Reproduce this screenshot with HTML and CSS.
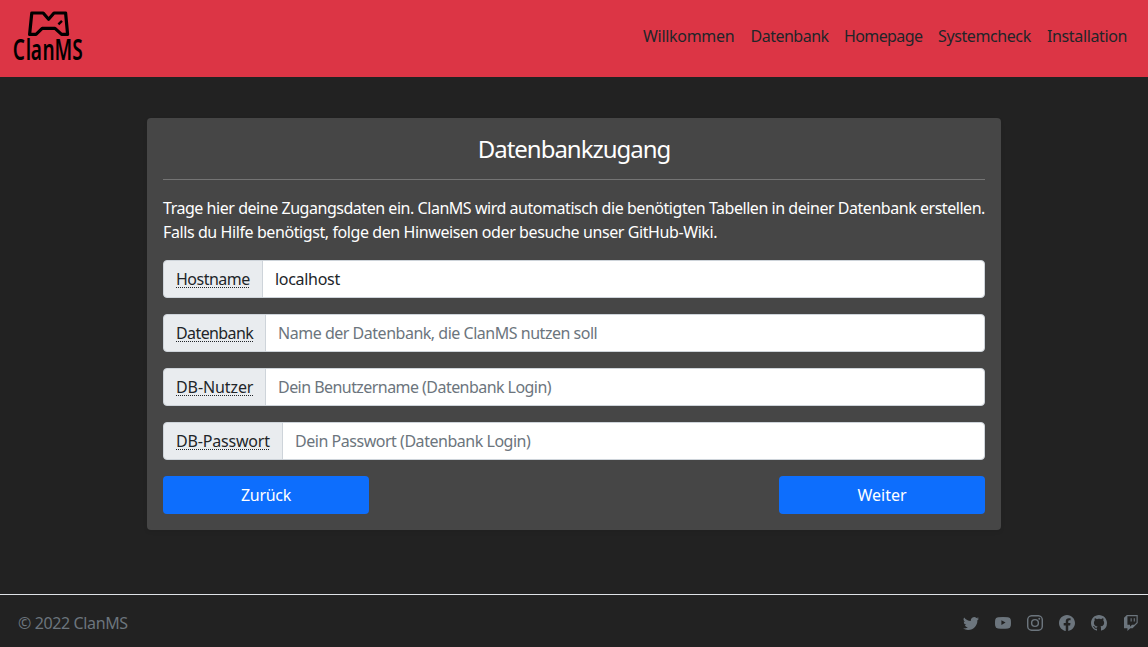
FILE: index.html
```html
<!DOCTYPE html>
<html lang="de">
<head>
<meta charset="utf-8">
<title>ClanMS Installation</title>
<link rel="stylesheet" href="styles.css">
</head>
<body>
<header class="navbar">
  <a class="brand" aria-label="ClanMS">
    <svg width="72" height="60" viewBox="0 0 72 60">
      <path class="mask" d="M19.8 5H31.2L36.6 11.2L42 5H53.6L55.6 26.4H49.6L43 20.4H30.2L24 26.4H17.6Z"/>
      <path class="eye" d="M46.4 16.4L50 12.8"/>
      <text transform="translate(0 52.2) scale(.68 1)" x="1.2 20.4 27.5 45 62.5 88.5">ClanMS</text>
    </svg>
  </a>
  <nav class="links">
    <a class="l1">Willkommen</a><a class="l2">Datenbank</a><a class="l3">Homepage</a><a class="l4">Systemcheck</a><a class="l5">Installation</a>
  </nav>
</header>
<main class="card">
  <h1>Datenbankzugang</h1>
  <hr>
  <p><span class="line1">Trage hier deine Zugangsdaten ein. ClanMS wird automatisch die benötigten Tabellen in deiner Datenbank erstellen.</span><br><span class="line2">Falls du Hilfe benötigst, folge den Hinweisen oder besuche unser GitHub-Wiki.</span></p>
  <form>
    <div class="group host"><label class="addon"><abbr>Hostname</abbr></label><input value="localhost"></div>
    <div class="group db"><label class="addon"><abbr>Datenbank</abbr></label><input placeholder="Name der Datenbank, die ClanMS nutzen soll"></div>
    <div class="group user"><label class="addon"><abbr>DB-Nutzer</abbr></label><input placeholder="Dein Benutzername (Datenbank Login)"></div>
    <div class="group pass"><label class="addon"><abbr>DB-Passwort</abbr></label><input type="text" placeholder="Dein Passwort (Datenbank Login)"></div>
    <div class="actions"><button type="button" class="back">Zurück</button><button type="button">Weiter</button></div>
  </form>
</main>
<footer class="footer">
  <span class="copy">© 2022 ClanMS</span>
  <div class="social">
    <svg viewBox="0 0 16 16"><path d="M5.026 15c6.038 0 9.341-5.003 9.341-9.334 0-.14 0-.282-.006-.422A6.685 6.685 0 0 0 16 3.542a6.658 6.658 0 0 1-1.889.518 3.301 3.301 0 0 0 1.447-1.817 6.533 6.533 0 0 1-2.087.793A3.286 3.286 0 0 0 7.875 6.03a9.325 9.325 0 0 1-6.767-3.429 3.289 3.289 0 0 0 1.018 4.382A3.323 3.323 0 0 1 .64 6.575v.045a3.288 3.288 0 0 0 2.632 3.218 3.203 3.203 0 0 1-.865.115 3.23 3.23 0 0 1-.614-.057 3.283 3.283 0 0 0 3.067 2.277A6.588 6.588 0 0 1 .78 13.58a6.32 6.32 0 0 1-.78-.045A9.344 9.344 0 0 0 5.026 15z"/></svg>
    <svg viewBox="0 0 16 16"><path fill-rule="evenodd" d="M3 2.2Q8 1.8 13 2.2Q15.5 2.4 15.8 4.8Q16.2 8 15.8 10.8Q15.5 13.3 13 13.5Q8 13.9 3 13.5Q.5 13.3.2 10.8Q-.2 8 .2 4.8Q.5 2.4 3 2.2ZM6.4 5.2V10L10.6 7.6Z"/></svg>
    <svg viewBox="0 0 16 16"><g fill="none" stroke="currentColor" stroke-width="1.45"><rect x=".72" y=".72" width="14.56" height="14.56" rx="4"/><circle cx="8" cy="8" r="3.38"/></g><circle cx="12.27" cy="3.73" r=".96"/></svg>
    <svg viewBox="0 0 16 16"><path d="M16 8.049c0-4.446-3.582-8.05-8-8.05C3.58 0-.002 3.603-.002 8.05c0 4.017 2.926 7.347 6.75 7.951v-5.625h-2.03V8.05H6.75V6.275c0-2.017 1.195-3.131 3.022-3.131.876 0 1.791.157 1.791.157v1.98h-1.009c-.993 0-1.303.621-1.303 1.258v1.51h2.218l-.354 2.326H9.25V16c3.824-.604 6.75-3.934 6.75-7.951z"/></svg>
    <svg viewBox="0 0 16 16"><path d="M8 0C3.58 0 0 3.58 0 8c0 3.54 2.29 6.53 5.47 7.59.4.07.55-.17.55-.38 0-.19-.01-.82-.01-1.49-2.01.37-2.53-.49-2.69-.94-.09-.23-.48-.94-.82-1.13-.28-.15-.68-.52-.01-.53.63-.01 1.08.58 1.23.82.72 1.21 1.87.87 2.33.66.07-.52.28-.87.51-1.07-1.78-.2-3.64-.89-3.64-3.95 0-.87.31-1.59.82-2.15-.08-.2-.36-1.02.08-2.12 0 0 .67-.21 2.2.82.64-.18 1.32-.27 2-.27.68 0 1.36.09 2 .27 1.53-1.04 2.2-.82 2.2-.82.44 1.1.16 1.92.08 2.12.51.56.82 1.27.82 2.15 0 3.07-1.87 3.75-3.65 3.95.29.25.54.73.54 1.48 0 1.07-.01 1.93-.01 2.2 0 .21.15.46.55.38A8.012 8.012 0 0 0 16 8c0-4.42-3.58-8-8-8z"/></svg>
    <svg viewBox="0 0 16 16"><path fill-rule="evenodd" d="M3.857 0 1 2.857v10.286h3.429V16l2.857-2.857H9.57L14.714 8V0H3.857zm9.714 7.429-2.285 2.285H9l-2 2v-2H4.429V1.143h9.142v6.286zM11.857 3.143h-1.143V6.57h1.143V3.143zm-3.143 0H7.571V6.57h1.143V3.143z"/></svg>
  </div>
</footer>
</body>
</html>
```
FILE: styles.css
```css
* { box-sizing: border-box; }
body {
  margin: 0;
  height: 647px;
  overflow: hidden;
  display: flex;
  flex-direction: column;
  background: #222;
  color: #fff;
  font: 16px/24px "Noto Sans", sans-serif;
}
.navbar {
  height: 77px;
  padding: 8px 21px 0 12px;
  display: flex;
  justify-content: space-between;
  background: #dc3545;
}
.brand svg { display: block; }
.brand text { font: 600 28px "Noto Sans", sans-serif; }
.mask { fill: none; stroke: #000; stroke-width: 3.2; stroke-linejoin: round; }
.eye { stroke: #000; stroke-width: 2.4; }
.links { display: flex; gap: 16px; padding-top: 16px; color: #212529; }
.links a { white-space: nowrap; }
.l1 { width: 91.5px; letter-spacing: -.3px; }
.l2 { width: 77.5px; letter-spacing: -.5px; }
.l3 { width: 78px; letter-spacing: -.6px; }
.l4 { width: 93px; letter-spacing: -.4px; }
.l5 { width: 80px; letter-spacing: -.37px; }
.card {
  width: 854px;
  height: 412px;
  margin: 41px auto 0;
  padding: 16px;
  border-radius: 4px;
  background: #464646;
  box-shadow: 0 2px 4px rgba(0, 0, 0, .075);
}
h1 { margin: 0; font-size: 24px; font-weight: 400; line-height: 29px; letter-spacing: -1.02px; text-align: center; }
hr { margin: 16px 0; height: 1px; border: 0; background: #747474; }
p { margin: 0 0 16px; white-space: nowrap; }
.line1 { letter-spacing: -.46px; }
.line2 { letter-spacing: -.41px; }
.group { display: flex; height: 38px; margin-bottom: 16px; }
.addon {
  flex: none;
  padding: 6px 12px;
  border: 1px solid #ced4da;
  border-radius: 4px 0 0 4px;
  background: #e9ecef;
  color: #212529;
  white-space: nowrap;
}
abbr {
  display: block;
  height: 21px;
  background: linear-gradient(90deg, #212529 50%, transparent 50%) 0 20px / 2px 1px repeat-x;
}
.host .addon { width: 100px; letter-spacing: -.5px; }
.db .addon { width: 103px; letter-spacing: -.6px; }
.user .addon { width: 103px; letter-spacing: -.1px; }
.pass .addon { width: 120px; letter-spacing: -.18px; }
input {
  flex: 1;
  min-width: 0;
  margin-left: -1px;
  padding: 6px 12px;
  border: 1px solid #ced4da;
  border-radius: 0 4px 4px 0;
  background: #fff;
  color: #212529;
  font: inherit;
}
.host input { letter-spacing: -.3px; }
.db input { letter-spacing: -.48px; }
.user input { letter-spacing: -.55px; }
.pass input { letter-spacing: -.47px; }
input::placeholder { color: #6c757d; opacity: 1; }
.actions { display: flex; justify-content: space-between; }
button {
  width: 206px;
  height: 38px;
  padding: 0;
  border: 0;
  border-radius: 4px;
  background: #0d6efd;
  color: #fff;
  font: inherit;
}
.back { letter-spacing: -.3px; }
.footer {
  height: 53px;
  margin-top: auto;
  padding: 4px 9px 0 18px;
  display: flex;
  align-items: center;
  justify-content: space-between;
  border-top: 1px solid #dee2e6;
  color: #6c757d;
}
.copy { letter-spacing: -.38px; }
.social { display: flex; gap: 16px; }
.social svg { display: block; width: 16px; height: 16px; fill: currentColor; }
```
